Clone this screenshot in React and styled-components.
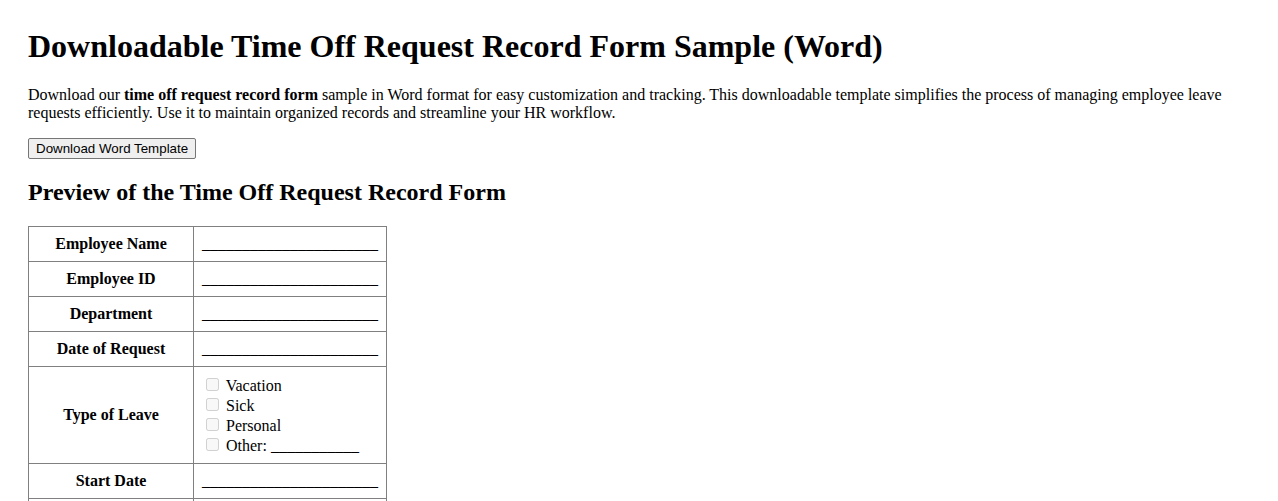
import React from 'react'
import styled, { createGlobalStyle } from 'styled-components'

const GlobalStyle = createGlobalStyle`
  body {
    margin: 0;
    font-family: "Liberation Serif", "Times New Roman", serif;
    font-size: 16px;
    color: #000;
    background: #fff;
  }
`

const Page = styled.div`
  padding: 28px;
`

const Title = styled.h1`
  margin: 0 0 0.67em;
  font-size: 32px;
  font-weight: bold;
`

const Intro = styled.p`
  margin: 0 0 16px;
  line-height: normal;
`

const DownloadButton = styled.button`
  font-family: "Liberation Sans", Arial, sans-serif;
  font-size: 13.33px;
  color: #000;
  background: #efefef;
  border: 1px solid #767676;
  border-radius: 2px;
  padding: 2px 7px;
  cursor: pointer;

  &:hover {
    background: #e5e5e5;
  }
`

const Subtitle = styled.h2`
  margin: 0.83em 0;
  font-size: 24px;
  font-weight: bold;
`

const FormTable = styled.table`
  border-collapse: collapse;

  th, td {
    border: 1px solid #808080;
    padding: 8px;
    vertical-align: middle;
  }
`

const Label = styled.th`
  width: 148px;
  text-align: center;
  font-weight: bold;
`

const Field = styled.td`
  width: 176px;
  text-align: left;
`

const Choice = styled.label`
  display: block;
  line-height: normal;

  input {
    margin: 3px 3px 3px 4px;
  }
`

const blank = (n) => '_'.repeat(n)

const textRows = ['Employee Name', 'Employee ID', 'Department', 'Date of Request']
const dateRows = ['Start Date', 'End Date', 'Total Days Requested', 'Reason for Request', 'Employee Signature', 'Supervisor Approval']
const leaveTypes = ['Vacation', 'Sick', 'Personal']

const App = () => {
  return (
    <Page>
      <GlobalStyle />
      <Title>Downloadable Time Off Request Record Form Sample (Word)</Title>
      <Intro>
        Download our <strong>time off request record form</strong> sample in Word format for easy customization and tracking. This downloadable template simplifies the process of managing employee leave requests efficiently. Use it to maintain organized records and streamline your HR workflow.
      </Intro>
      <DownloadButton>Download Word Template</DownloadButton>

      <Subtitle>Preview of the Time Off Request Record Form</Subtitle>
      <FormTable>
        <tbody>
          {textRows.map((row) => (
            <tr key={row}>
              <Label>{row}</Label>
              <Field>{blank(22)}</Field>
            </tr>
          ))}
          <tr>
            <Label>Type of Leave</Label>
            <Field>
              {leaveTypes.map((type) => (
                <Choice key={type}>
                  <input type="checkbox" disabled /> {type}
                </Choice>
              ))}
              <Choice>
                <input type="checkbox" disabled /> Other: {blank(11)}
              </Choice>
            </Field>
          </tr>
          {dateRows.map((row) => (
            <tr key={row}>
              <Label>{row}</Label>
              <Field>{blank(22)}</Field>
            </tr>
          ))}
        </tbody>
      </FormTable>
    </Page>
  )
}

export default App
